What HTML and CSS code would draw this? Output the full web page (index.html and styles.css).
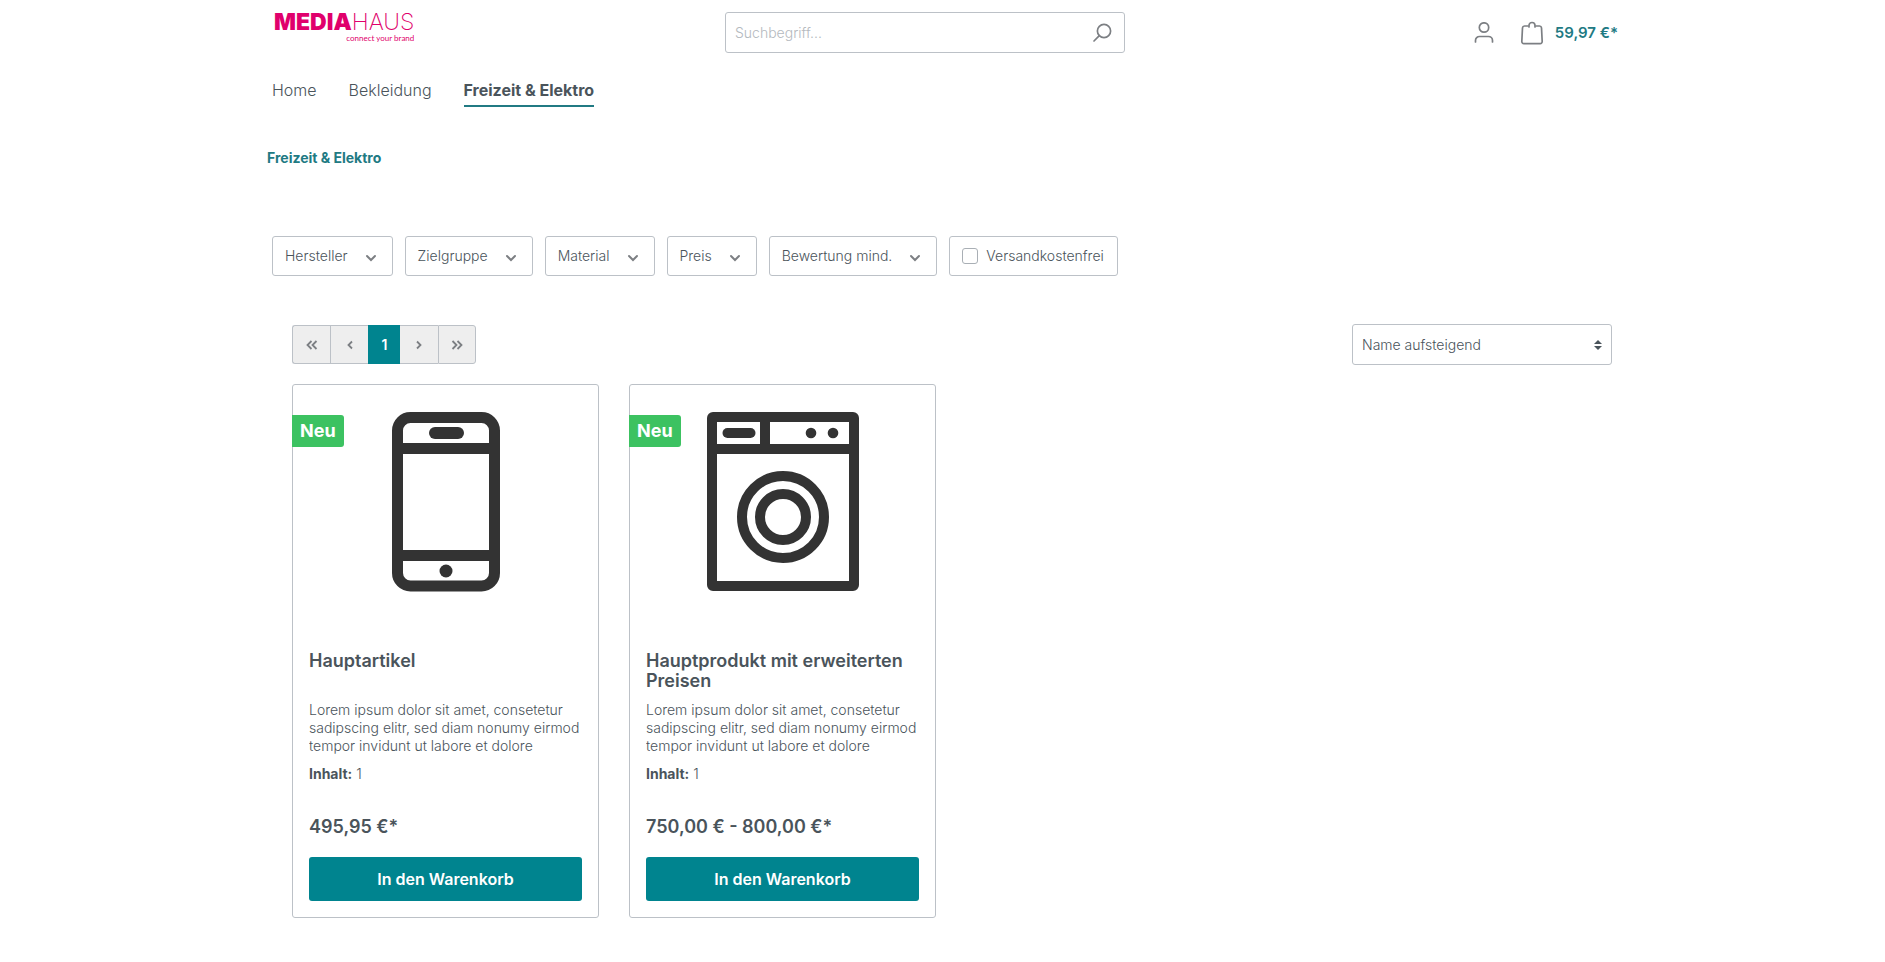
FILE: index.html
```html
<!DOCTYPE html>
<html lang="de">
<head>
<meta charset="utf-8">
<meta name="viewport" content="width=device-width, initial-scale=1">
<title>Freizeit &amp; Elektro</title>
<link rel="stylesheet" href="styles.css">
</head>
<body>
<div class="container">
  <header class="header">
    <a class="logo" href="#" aria-label="Mediahaus">
      <span class="logo-name"><b>MEDIA</b><span class="logo-thin">HAUS</span></span>
      <span class="logo-claim">connect your brand</span>
    </a>
    <form class="search" role="search">
      <input class="search-input" type="search" placeholder="Suchbegriff..." aria-label="Suchbegriff">
      <button class="search-button" type="button" aria-label="Suchen">
        <svg width="20" height="20" viewBox="0 0 20 20" fill="none" stroke="#7c7f83" stroke-width="1.7" stroke-linecap="round"><circle cx="12" cy="8" r="6.6"/><path d="M7.3 12.7 2 18"/></svg>
      </button>
    </form>
    <div class="actions">
      <button class="action" type="button" aria-label="Mein Konto">
        <svg width="22" height="22" viewBox="0 0 22 22" fill="none" stroke="#7c7f83" stroke-width="1.7" stroke-linecap="round"><circle cx="11" cy="5.500" r="4.700"/><path d="M2.500 20v-1.500a4 4 0 0 1 4-4h9a4 4 0 0 1 4 4V20"/></svg>
      </button>
      <a class="action cart" href="#">
        <svg width="24" height="24" viewBox="0 0 24 24" fill="none" stroke="#7c7f83" stroke-width="1.700" stroke-linecap="round"><path d="M8 5H4.500a2 2 0 0 0-2 1.800L1.800 20.500a2 2 0 0 0 2 2.100h16.400a2 2 0 0 0 2-2.100L21.500 6.800a2 2 0 0 0-2-1.800H16"/><path d="M9 6V4.500a3 3 0 0 1 6 0V6"/></svg>
        <span>59,97 €*</span>
      </a>
    </div>
  </header>
  <nav class="nav">
    <a href="#">Home</a>
    <a href="#">Bekleidung</a>
    <a class="active" href="#">Freizeit &amp; Elektro</a>
  </nav>
  <nav class="breadcrumb" aria-label="Breadcrumb"><a href="#">Freizeit &amp; Elektro</a></nav>

  <main>
    <div class="filters">
      <button class="filter" type="button">Hersteller <svg class="chevron" viewBox="0 0 16 16"><path d="m4 6 4 4 4-4"/></svg></button>
      <button class="filter" type="button">Zielgruppe <svg class="chevron" viewBox="0 0 16 16"><path d="m4 6 4 4 4-4"/></svg></button>
      <button class="filter" type="button">Material <svg class="chevron" viewBox="0 0 16 16"><path d="m4 6 4 4 4-4"/></svg></button>
      <button class="filter" type="button">Preis <svg class="chevron" viewBox="0 0 16 16"><path d="m4 6 4 4 4-4"/></svg></button>
      <button class="filter" type="button">Bewertung mind. <svg class="chevron" viewBox="0 0 16 16"><path d="m4 6 4 4 4-4"/></svg></button>
      <label class="filter filter-check" for="free"><input id="free" type="checkbox">Versandkostenfrei</label>
    </div>

    <section class="listing">
      <div class="toolbar">
        <div class="pagination">
          <button type="button" aria-label="Erste Seite"><svg viewBox="0 0 12 12"><path d="M5.500 2 1.500 6l4 4M10.500 2l-4 4 4 4"/></svg></button>
          <button type="button" aria-label="Vorherige Seite"><svg viewBox="0 0 12 12"><path d="M8 2.500 4.500 6 8 9.500"/></svg></button>
          <button class="current" type="button">1</button>
          <button type="button" aria-label="Nächste Seite"><svg viewBox="0 0 12 12"><path d="M4 2.500 7.500 6 4 9.500"/></svg></button>
          <button type="button" aria-label="Letzte Seite"><svg viewBox="0 0 12 12"><path d="m1.500 2 4 4-4 4M6.500 2l4 4-4 4"/></svg></button>
        </div>
        <div class="sorting">
          <select aria-label="Sortierung"><option>Name aufsteigend</option></select>
          <svg class="sort-arrows" width="8" height="10" viewBox="0 0 8 10" fill="#4a545b"><path d="M4 0 8 4H0zM4 10 0 6h8z"/></svg>
        </div>
      </div>

      <div class="products">
        <article class="card">
          <span class="badge">Neu</span>
          <div class="card-image">
            <svg width="108" height="180" viewBox="0 0 108 180" fill="none" stroke="#333" stroke-width="11"><rect x="5.500" y="5.500" width="97" height="168.500" rx="13"/><path d="M5 36.500h98M5 143.500h98"/><path d="M43 21h23" stroke-linecap="round" stroke-width="12"/><circle cx="54" cy="159" r="6.500" fill="#333" stroke="none"/></svg>
          </div>
          <h2 class="card-title">Hauptartikel</h2>
          <p class="card-text">Lorem ipsum dolor sit amet, consetetur sadipscing elitr, sed diam nonumy eirmod tempor invidunt ut labore et dolore</p>
          <p class="card-unit"><b>Inhalt:</b> 1</p>
          <p class="card-price">495,95 €*</p>
          <button class="buy" type="button">In den Warenkorb</button>
        </article>
        <article class="card">
          <span class="badge">Neu</span>
          <div class="card-image">
            <svg width="152" height="180" viewBox="0 0 152 180" fill="none" stroke="#333" stroke-width="10"><rect x="5" y="5" width="142" height="169" rx="1"/><path d="M5 37h142M58 5v32"/><path d="M20.500 21h23" stroke-linecap="round"/><circle cx="104" cy="21" r="5.300" fill="#333" stroke="none"/><circle cx="126" cy="21" r="5.300" fill="#333" stroke="none"/><circle cx="76" cy="105" r="41"/><circle cx="76" cy="105" r="23"/></svg>
          </div>
          <h2 class="card-title">Hauptprodukt mit erweiterten Preisen</h2>
          <p class="card-text">Lorem ipsum dolor sit amet, consetetur sadipscing elitr, sed diam nonumy eirmod tempor invidunt ut labore et dolore</p>
          <p class="card-unit"><b>Inhalt:</b> 1</p>
          <p class="card-price">750,00 € - 800,00 €*</p>
          <button class="buy" type="button">In den Warenkorb</button>
        </article>
      </div>
    </section>
  </main>
</div>
</body>
</html>
```
FILE: styles.css
```css
* { box-sizing: border-box; }

body {
  margin: 0;
  background: #fff;
  color: #4a545b;
  font: 300 14px/18px Inter, sans-serif;
}

a { color: inherit; text-decoration: none; }
button, input, select { font: inherit; color: inherit; margin: 0; }
h2, p { margin: 0; }
svg { display: block; flex: none; }

.container {
  max-width: 1351px;
  margin: 0 auto;
}

.header {
  display: grid;
  grid-template-columns: 407fr 400px 449fr;
  padding: 12px 0 0 7px;
  column-gap: 44px;
}

.logo {
  display: flex;
  flex-direction: column;
  align-items: flex-end;
  justify-self: start;
  color: #e0006c;
}
.logo-name {
  display: flex;
  font-size: 23px;
  line-height: 20px;
}
.logo-name b { font-weight: 900; }
.logo-thin { font-weight: 200; }
.logo-claim {
  margin-top: 1px;
  font: 400 8px/10px Lato, sans-serif;
}

.search {
  display: flex;
  height: 41px;
  border: 1px solid #bcc1c7;
  border-radius: 3px;
}
.search-input {
  flex: 1;
  min-width: 0;
  padding: 0 9px;
  border: 0;
  background: none;
  outline: 0;
}
.search-input::placeholder { color: #b4b9be; }
.search-button {
  padding: 0 12px;
  border: 0;
  background: none;
}

.actions {
  display: flex;
  align-items: center;
  justify-content: flex-end;
  gap: 25px;
}
.action { padding: 0; border: 0; background: none; }
.cart {
  display: flex;
  align-items: center;
  gap: 11px;
  color: #217a83;
  font-size: 15px;
  font-weight: 600;
}

.nav {
  display: flex;
  gap: 32px;
  padding: 25px 5px 0;
  font-size: 16px;
  line-height: 24px;
}
.nav a { padding-bottom: 3px; border-bottom: 2px solid transparent; }
.nav .active { border-color: #217a83; font-weight: 700; }

.breadcrumb {
  padding-top: 42px;
  color: #217a83;
  font-weight: 700;
}

.filters {
  display: flex;
  flex-wrap: wrap;
  gap: 12px;
  padding: 69px 5px 0;
}
.filter {
  display: flex;
  align-items: center;
  gap: 15px;
  height: 40px;
  padding: 0 13px 0 12px;
  border: 1px solid #bcc1c7;
  border-radius: 3px;
  background: #fff;
}
.filter-check { gap: 8px; }
.filter-check input {
  appearance: none;
  width: 16px;
  height: 16px;
  border: 1px solid #a9afb5;
  border-radius: 3px;
}
.chevron {
  width: 16px;
  height: 16px;
  margin-top: 3px;
  fill: none;
  stroke: #7c7f83;
  stroke-width: 2;
  stroke-linecap: round;
}

.listing { padding: 48px 6px 0 25px; }
.toolbar {
  display: flex;
  align-items: center;
  justify-content: space-between;
}

.pagination {
  display: flex;
  height: 39px;
}
.pagination button {
  display: grid;
  place-items: center;
  width: 38px;
  padding: 0;
  border: 1px solid #bcc1c7;
  border-right-width: 0;
  background: #eee;
}
.pagination button:first-child { border-radius: 3px 0 0 3px; }
.pagination button:last-child { border-right-width: 1px; border-radius: 0 3px 3px 0; }
.pagination .current {
  width: 32px;
  border-color: #00848f;
  background: #00848f;
  color: #fff;
  font-weight: 600;
}
.pagination .current + button { border-left-width: 0; }
.pagination svg {
  width: 12px;
  height: 12px;
  fill: none;
  stroke: #7c7f83;
  stroke-width: 1.8;
}

.sorting { position: relative; width: 260px; }
.sorting select {
  display: block;
  appearance: none;
  width: 100%;
  height: 41px;
  padding: 0 24px 0 9px;
  border: 1px solid #bcc1c7;
  border-radius: 3px;
  background: #fff;
}
.sort-arrows {
  position: absolute;
  top: 16px;
  right: 10px;
  pointer-events: none;
}

.products {
  display: grid;
  grid-template-columns: repeat(4, 1fr);
  gap: 30px;
  padding: 19px 2px 0 0;
}
.card {
  position: relative;
  display: flex;
  flex-direction: column;
  padding: 16px;
  border: 1px solid #bcc1c7;
  border-radius: 3px;
}
.badge {
  position: absolute;
  top: 30px;
  left: -1px;
  padding: 0 8px;
  border-radius: 0 3px 3px 0;
  background: #3cc261;
  color: #fff;
  font-size: 18px;
  line-height: 32px;
  font-weight: 700;
}
.card-image {
  display: flex;
  justify-content: center;
  height: 250px;
  padding-top: 11px;
}
.card-title {
  min-height: 40px;
  font-size: 18px;
  line-height: 20px;
  font-weight: 600;
}
.card-text { height: 54px; margin-top: 10px; overflow: hidden; }
.card-unit { margin-top: 10px; }
.card-unit b { font-weight: 700; }
.card-price {
  margin: 34px 0 20px;
  font-size: 18px;
  line-height: 20px;
  font-weight: 600;
}
.buy {
  height: 44px;
  border: 0;
  border-radius: 3px;
  background: #00848f;
  color: #fff;
  font-size: 16px;
  font-weight: 600;
}
```
